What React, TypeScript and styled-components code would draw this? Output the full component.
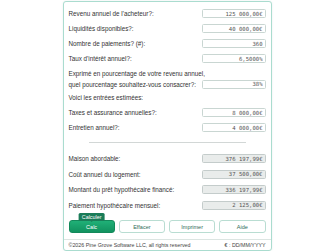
import React from 'react';
import styled, {createGlobalStyle} from 'styled-components';

const GlobalStyle = createGlobalStyle`
  html, body {
    margin: 0;
    padding: 0;
    background: #ffffff;
  }
  body {
    font-family: "Liberation Sans", Arial, sans-serif;
  }
`;

const Card = styled.div`
  box-sizing: border-box;
  width: 209px;
  margin: 1px auto 0;
  padding: 4px 5px 0;
  border: 1px solid #aadccf;
  border-radius: 3px;
  box-shadow: 0 0 2px rgba(40, 120, 100, 0.12);
  background: #ffffff;
  font-size: 6.3px;
`;

const Row = styled.div<{ $h?: number }>`
  display: flex;
  align-items: center;
  justify-content: space-between;
  height: ${({$h}) => $h ?? 15}px;
`;

const Label = styled.span`
  font-size: 6.3px;
  line-height: 11px;
  color: #333;
  white-space: nowrap;
`;

const Note = styled.div`
  margin-top: 1.5px;
  font-size: 6.3px;
  line-height: 11px;
  color: #333;
  white-space: nowrap;
`;

const Field = styled.input<{ $result?: boolean }>`
  box-sizing: border-box;
  width: 64px;
  height: 9px;
  padding: 0 2px;
  border: 1px solid ${({$result}) => $result ? '#c4cccb' : '#c9d6d2'};
  border-radius: 1.5px;
  background: ${({$result}) => $result ? '#e9eceb' : '#ffffff'};
  font-family: "DejaVu Sans Mono", "Liberation Mono", monospace;
  font-size: 5.6px;
  color: #555;
  text-align: right;
  outline: none;
`;

const Divider = styled.hr`
  width: 157px;
  height: 0;
  margin: 7px auto 8px;
  border: 0;
  border-top: 1px solid #d2d7d6;
`;

const ButtonRow = styled.div`
  display: grid;
  grid-template-columns: repeat(4, 1fr);
  gap: 4px;
  margin-top: 7px;
`;

const ButtonWrap = styled.div`
  position: relative;
  display: flex;
`;

const Button = styled.button<{ $primary?: boolean }>`
  display: block;
  box-sizing: border-box;
  width: 100%;
  height: 13px;
  padding: 0;
  border-radius: 3px;
  border: 1px solid ${({$primary}) => $primary ? '#13895a' : '#b9ddd2'};
  background: ${({$primary}) => $primary ? 'linear-gradient(#20b077, #11925f)' : '#ffffff'};
  color: ${({$primary}) => $primary ? '#ffffff' : '#2f6b57'};
  font-family: "Liberation Sans", Arial, sans-serif;
  font-size: 5.5px;
  cursor: pointer;
`;

const Tooltip = styled.span`
  position: absolute;
  z-index: 1;
  left: 50%;
  bottom: calc(100% - 0.5px);
  transform: translateX(-50%);
  padding: 0 3.5px;
  height: 8px;
  line-height: 8px;
  border-radius: 1.5px;
  background: #1a7c58;
  color: #ffffff;
  font-size: 5.4px;
  white-space: nowrap;

  &::after {
    content: "";
    position: absolute;
    left: 50%;
    top: 100%;
    margin-left: -1.5px;
    border: 1.5px solid transparent;
    border-top-color: #1a7c58;
  }
`;

const Footer = styled.div`
  display: flex;
  align-items: center;
  justify-content: space-between;
  height: 10px;
  margin: 6px -5px 0;
  padding: 0 5px;
  border-top: 1px solid #dce5e2;
  font-size: 5.3px;
  color: #444;
`;

const inputs = [
    {label: "Revenu annuel de l'acheteur?:", value: '125 000,00€'},
    {label: 'Liquidités disponibles?:', value: '40 000,00€'},
    {label: 'Nombre de paiements? (#):', value: '360'},
    {label: "Taux d'intérêt annuel?:", value: '6,5000%'},
];

const estimates = [
    {label: 'Taxes et assurance annuelles?:', value: '8 000,00€'},
    {label: 'Entretien annuel?:', value: '4 000,00€'},
];

const results = [
    {label: 'Maison abordable:', value: '376 197,99€'},
    {label: 'Coût annuel du logement:', value: '37 500,00€'},
    {label: 'Montant du prêt hypothécaire financé:', value: '336 197,99€'},
    {label: 'Paiement hypothécaire mensuel:', value: '2 125,00€'},
];

const App = () => {
    return (
        <>
            <GlobalStyle/>
            <Card>
                {inputs.map((v) => (
                    <Row key={v.label}>
                        <Label>{v.label}</Label>
                        <Field value={v.value} readOnly/>
                    </Row>
                ))}
                <Note>Exprimé en pourcentage de votre revenu annuel,</Note>
                <Row $h={11.5}>
                    <Label>quel pourcentage souhaitez-vous consacrer?:</Label>
                    <Field value="38%" readOnly/>
                </Row>
                <Row>
                    <Label>Voici les entrées estimées:</Label>
                </Row>
                {estimates.map((v) => (
                    <Row key={v.label}>
                        <Label>{v.label}</Label>
                        <Field value={v.value} readOnly/>
                    </Row>
                ))}
                <Divider/>
                {results.map((v) => (
                    <Row key={v.label} $h={15.5}>
                        <Label>{v.label}</Label>
                        <Field $result value={v.value} readOnly/>
                    </Row>
                ))}
                <ButtonRow>
                    <ButtonWrap>
                        <Tooltip>Calculer</Tooltip>
                        <Button $primary>Calc</Button>
                    </ButtonWrap>
                    <Button>Effacer</Button>
                    <Button>Imprimer</Button>
                    <Button>Aide</Button>
                </ButtonRow>
                <Footer>
                    <span>©2026 Pine Grove Software LLC, all rights reserved</span>
                    <span>€ : DD/MM/YYYY</span>
                </Footer>
            </Card>
        </>
    );
};

export default App;
